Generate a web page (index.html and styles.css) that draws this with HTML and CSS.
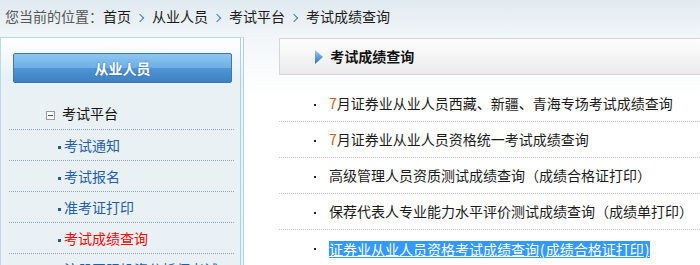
FILE: index.html
```html
<!DOCTYPE html>
<html lang="zh-CN">
<head>
    <meta charset="UTF-8">
    <title>考试成绩查询</title>
    <link rel="stylesheet" href="styles.css">
</head>
<body>
    <div class="crumbs">
        <span class="here">您当前的位置：</span>首页<span class="sep"></span>从业人员<span class="sep"></span>考试平台<span class="sep"></span>考试成绩查询
    </div>

    <div class="main">
        <div class="side">
            <div class="side-btn">从业人员</div>
            <ul class="nav">
                <li class="nav-title"><span class="fold"></span>考试平台</li>
                <li class="nav-item"><a href="#">考试通知</a></li>
                <li class="nav-item"><a href="#">考试报名</a></li>
                <li class="nav-item"><a href="#">准考证打印</a></li>
                <li class="nav-item active"><a href="#">考试成绩查询</a></li>
                <li class="nav-item"><a href="#">注册国际投资分析师考试</a></li>
            </ul>
        </div>

        <div class="content">
            <div class="panel-head">
                <svg class="arrow" width="8" height="14" viewBox="0 0 8 14">
                    <defs>
                        <linearGradient id="ag" x1="0" y1="0" x2="0" y2="1">
                            <stop offset="0" stop-color="#9ccbf3"/>
                            <stop offset="1" stop-color="#2b6fc6"/>
                        </linearGradient>
                    </defs>
                    <path d="M0 0 L8 7 L0 14 Z" fill="url(#ag)"/>
                </svg>
                考试成绩查询
            </div>
            <ul class="list">
                <li><a href="#"><span class="num">7</span>月证券业从业人员西藏、新疆、青海专场考试成绩查询</a></li>
                <li><a href="#"><span class="num">7</span>月证券业从业人员资格统一考试成绩查询</a></li>
                <li><a href="#">高级管理人员资质测试成绩查询（成绩合格证打印）</a></li>
                <li><a href="#">保荐代表人专业能力水平评价测试成绩查询（成绩单打印）</a></li>
                <li><a href="#" class="picked">证券业从业人员资格考试成绩查询<span class="paren">(</span>成绩合格证打印<span class="paren">)</span></a></li>
            </ul>
        </div>
    </div>
</body>
</html>
```

FILE: styles.css
```css
body {
    margin: 0;
    font-family: "Noto Sans CJK SC", "Liberation Sans", sans-serif;
    font-size: 14px;
    color: #1a1a1a;
    background: linear-gradient(#e0eaf0 0, #f2f6f9 37px, #fff 95px) no-repeat;
    overflow: hidden;
}

ul {
    margin: 0;
    padding: 0;
    list-style: none;
}

a {
    color: inherit;
    text-decoration: none;
}

.crumbs {
    height: 37px;
    line-height: 32px;
    padding-left: 5px;
    white-space: nowrap;
}

.crumbs .here {
    color: #555;
}

.crumbs .sep {
    display: inline-block;
    width: 5px;
    height: 5px;
    margin: 0 9px 1px 6px;
    border-top: 1.5px solid #3b7fc2;
    border-right: 1.5px solid #3b7fc2;
    transform: rotate(45deg);
    vertical-align: middle;
}

.main {
    display: flex;
    align-items: flex-start;
}

.side {
    width: 239px;
    flex-shrink: 0;
    height: 260px;
    padding-top: 15px;
    border: 1px solid #b7dce7;
    border-right: 4px double #a9d4e2;
    background: linear-gradient(#fff 0, #e9f1f5 38px);
}

.side-btn {
    width: 217px;
    height: 28px;
    margin-left: 12px;
    line-height: 28px;
    text-align: center;
    color: #fff;
    font-weight: bold;
    text-shadow: 0 0 2px rgba(20, 70, 130, 0.6);
    border: 1px solid #3a78b4;
    border-radius: 2px;
    background: linear-gradient(#8ec6f0 0, #6eb1e7 48%, #4f95d6 52%, #3f80c3 100%);
}

.nav {
    margin: 0 6px 0 8px;
}

.nav-title {
    margin-top: 15px;
    height: 31px;
    line-height: 30px;
    padding-left: 37px;
    border-bottom: 1px dotted #8fa3b0;
    color: #111;
}

.fold {
    display: inline-block;
    position: relative;
    width: 7px;
    height: 7px;
    margin-right: 7px;
    border: 1px solid #9a9a9a;
    background: #fff;
    vertical-align: -1px;
}

.fold::after {
    content: "";
    position: absolute;
    left: 1px;
    top: 3px;
    width: 5px;
    height: 1px;
    background: #555;
}

.nav-item {
    height: 30px;
    line-height: 30px;
    padding-left: 49px;
    border-bottom: 1px dotted #8fa3b0;
    color: #1f5ea6;
    white-space: nowrap;
}

.nav-item:first-of-type {
    height: 28px;
    line-height: 28px;
}

.nav-item::before {
    content: "";
    display: inline-block;
    width: 3px;
    height: 3px;
    margin-right: 3px;
    background: #1f5ea6;
    vertical-align: middle;
}

.nav-item.active {
    color: #ff0000;
}

.content {
    flex: 1;
    margin-left: 35px;
    padding-top: 1px;
    min-width: 0;
}

.panel-head {
    height: 35px;
    line-height: 35px;
    padding-left: 35px;
    border: 1px solid #d6d6d6;
    border-right: 0;
    background: linear-gradient(#fdfdfd, #ececec);
    font-weight: bold;
    color: #111;
    white-space: nowrap;
}

.panel-head .arrow {
    vertical-align: -2px;
    margin-right: 4px;
}

.list {
    margin-top: 11px;
}

.list li {
    height: 35px;
    line-height: 35px;
    padding-left: 35px;
    border-bottom: 1px dotted #c4c4c4;
    white-space: nowrap;
}

.list li:last-child {
    border-bottom: 0;
}

.list li::before {
    content: "";
    display: inline-block;
    width: 2px;
    height: 2px;
    margin-right: 13px;
    background: #222;
    vertical-align: middle;
}

.list .num {
    color: #c8621c;
}

.list .picked {
    display: inline-block;
    height: 17px;
    line-height: 17px;
    vertical-align: middle;
    background: #3399ff;
    color: #fff;
    text-decoration: underline;
}

.list .paren {
    padding: 0 1px;
}
```
